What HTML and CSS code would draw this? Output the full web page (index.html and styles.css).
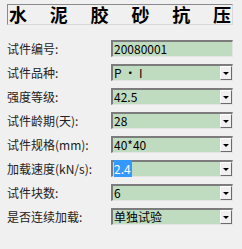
FILE: index.html
```html
<!DOCTYPE html>
<html>
<head>
<meta charset="utf-8">
<link rel="stylesheet" href="styles.css">
</head>
<body>
<div class="page">
  <div class="title">
    <span>水</span><span>泥</span><span>胶</span><span>砂</span><span>抗</span><span>压</span>
  </div>
  <div class="form">
    <div class="label">试件编号:</div>
    <div class="field"><span class="val">20080001</span></div>

    <div class="label">试件品种:</div>
    <div class="field"><span class="val">P · I</span><span class="btn"><span class="arrow"></span></span></div>

    <div class="label">强度等级:</div>
    <div class="field"><span class="val">42.5</span><span class="btn"><span class="arrow"></span></span></div>

    <div class="label">试件龄期(天):</div>
    <div class="field"><span class="val">28</span><span class="btn"><span class="arrow"></span></span></div>

    <div class="label">试件规格(mm):</div>
    <div class="field"><span class="val">40*40</span><span class="btn"><span class="arrow"></span></span></div>

    <div class="label">加载速度(kN/s):</div>
    <div class="field"><span class="val"><span class="sel">2.4</span></span><span class="btn"><span class="arrow"></span></span></div>

    <div class="label">试件块数:</div>
    <div class="field"><span class="val">6</span><span class="btn"><span class="arrow"></span></span></div>

    <div class="label">是否连续加载:</div>
    <div class="field"><span class="val">单独试验</span><span class="btn"><span class="arrow"></span></span></div>
  </div>
</div>
</body>
</html>
```
FILE: styles.css
```css
html, body {
  margin: 0;
  padding: 0;
  background: #f0f0f0;
}
.page {
  width: 242px;
  height: 249px;
  padding: 4px 9px 0 7px;
  box-sizing: border-box;
  font-family: "Noto Sans CJK SC", "Liberation Sans", sans-serif;
  color: #000;
}
.title {
  height: 21px;
  box-sizing: border-box;
  border: 1px solid #a0a0a0;
  border-top-color: #8a8a8a;
  border-left-color: #8a8a8a;
  border-bottom-color: #d8d8d8;
  border-right-color: #d8d8d8;
  display: flex;
  justify-content: space-between;
  align-items: center;
  padding: 0 1px 0 1px;
  font-size: 18px;
  font-weight: 700;
  line-height: 19px;
}
.form {
  display: grid;
  grid-template-columns: 104px 122px;
  grid-auto-rows: 17px;
  row-gap: 7px;
  margin-top: 15px;
}
.label {
  font-size: 12px;
  line-height: 17px;
  white-space: nowrap;
  color: #222;
}
.field {
  display: flex;
  align-items: stretch;
  background: #c0dcc0;
  border-top: 2px solid #7c7c7c;
  border-left: 2px solid #7c7c7c;
  border-right: 1px solid #e4e4e4;
  border-bottom: 1px solid #e4e4e4;
  box-sizing: border-box;
  font-size: 12px;
  line-height: 14px;
}
.val {
  flex: 1;
  padding-left: 1px;
  white-space: nowrap;
}
.sel {
  background: #3399ff;
  color: #fff;
  padding-right: 1px;
}
.btn {
  width: 12px;
  background: #f0f0f0;
  border-left: 1px solid #fff;
  border-top: 1px solid #fff;
  border-right: 1px solid #6a6a6a;
  border-bottom: 1px solid #6a6a6a;
  box-sizing: border-box;
  display: flex;
  align-items: center;
  justify-content: center;
}
.arrow {
  width: 0;
  height: 0;
  border-left: 3px solid transparent;
  border-right: 3px solid transparent;
  border-top: 3px solid #000;
  margin-top: 1px;
}
```
